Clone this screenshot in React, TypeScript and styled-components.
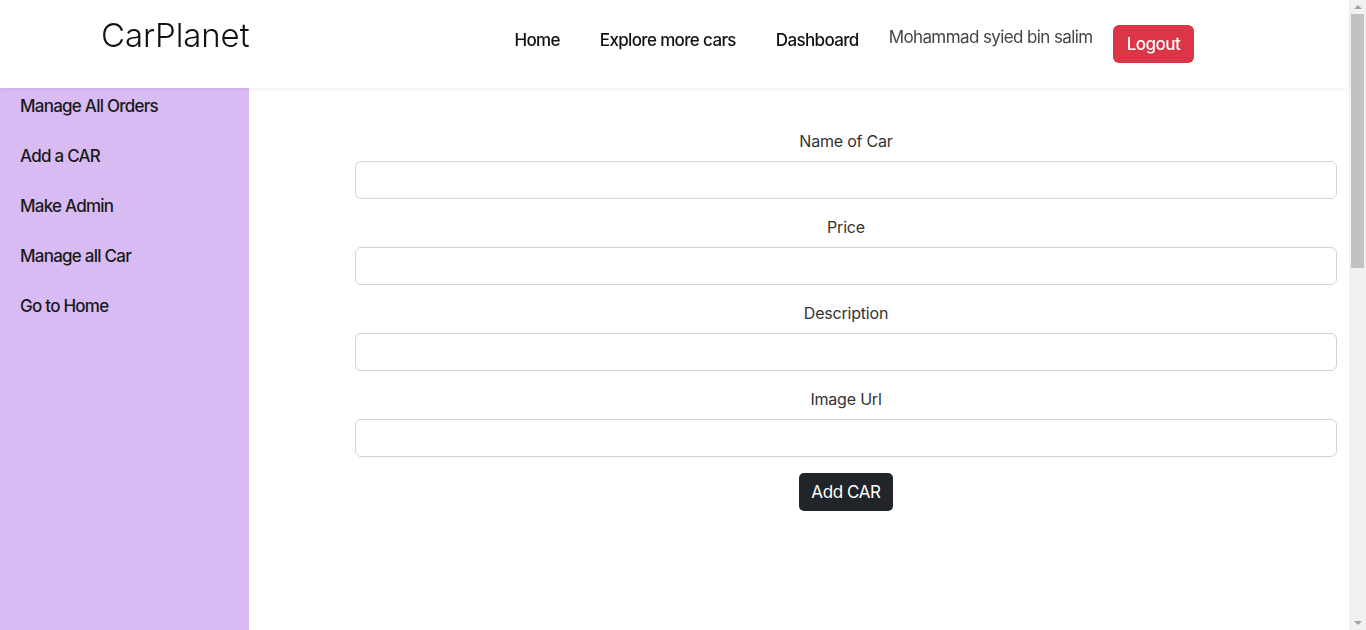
import styled, {createGlobalStyle} from "styled-components";

const GlobalStyle = createGlobalStyle`
    html, body {
        margin: 0;
        padding: 0;
    }
    body {
        font-family: "Inter", "Lato", sans-serif;
        color: #212529;
        background: #fff;
    }
    * {
        box-sizing: border-box;
    }
`

const navLinks = ["Home", "Explore more cars", "Dashboard"];
const sideLinks = ["Manage All Orders", "Add a CAR", "Make Admin", "Manage all Car", "Go to Home"];
const fields = ["Name of Car", "Price", "Description", "Image Url"];

export default function App() {
    return (
        <>
            <GlobalStyle/>
            <Page>
                <Header>
                    <Brand>CarPlanet</Brand>
                    <Nav>
                        {navLinks.map((link) => (
                            <NavLink key={link}>{link}</NavLink>
                        ))}
                        <UserName>Mohammad syied bin salim</UserName>
                        <LogoutButton>Logout</LogoutButton>
                    </Nav>
                </Header>
                <Body>
                    <Sidebar>
                        {sideLinks.map((link) => (
                            <SideLink key={link}>{link}</SideLink>
                        ))}
                    </Sidebar>
                    <Main>
                        <Form onSubmit={(e) => e.preventDefault()}>
                            {fields.map((field) => (
                                <Field key={field}>
                                    <Label>{field}</Label>
                                    <Input type="text"/>
                                </Field>
                            ))}
                            <SubmitButton type="submit">Add CAR</SubmitButton>
                        </Form>
                    </Main>
                </Body>
            </Page>
            <ScrollTrack>
                <ScrollArrow/>
                <ScrollThumb/>
                <ScrollArrow $down/>
            </ScrollTrack>
        </>
    );
}

const Page = styled.div`
    width: calc(100% - 17px);
    min-height: 1490px;
    display: flex;
    flex-direction: column;
`

const Header = styled.header`
    height: 88px;
    display: flex;
    align-items: flex-start;
    padding: 0 0 0 101px;
    box-shadow: 0 2px 4px rgba(0, 0, 0, 0.06);
    position: relative;
    z-index: 1;
`

const Brand = styled.span`
    font-size: 33px;
    font-weight: 300;
    line-height: 40px;
    margin-top: 15px;
    color: #111;
    letter-spacing: -0.1px;
`

const Nav = styled.nav`
    display: flex;
    align-items: flex-start;
    margin-left: 265px;
    margin-top: 25px;
`

const NavLink = styled.a`
    font-size: 17px;
    font-weight: 500;
    line-height: 30px;
    color: #111;
    margin-right: 40px;
    letter-spacing: -0.65px;
    cursor: pointer;

    &:last-of-type {
        margin-right: 30px;
    }
`

const UserName = styled.span`
    font-size: 17px;
    font-weight: 400;
    line-height: 24px;
    color: #444;
    letter-spacing: -0.6px;
`

const LogoutButton = styled.button`
    margin-left: 20px;
    height: 38px;
    padding: 0 14px;
    border: none;
    border-radius: 6px;
    background: #dc3545;
    color: #fff;
    font-family: inherit;
    font-size: 17px;
    font-weight: 500;
    letter-spacing: -0.5px;
`

const Body = styled.div`
    flex: 1;
    display: flex;
`

const Sidebar = styled.aside`
    width: 249px;
    background: #d8bbf2;
    padding: 6px 0 0 20px;
    display: flex;
    flex-direction: column;
    gap: 26px;
`

const SideLink = styled.a`
    font-size: 17px;
    font-weight: 500;
    line-height: 24px;
    color: #1a1a1a;
    letter-spacing: -0.75px;
    cursor: pointer;
`

const Main = styled.main`
    flex: 1;
    padding: 41px 12px 0 106px;
`

const Form = styled.form`
    display: flex;
    flex-direction: column;
    align-items: center;
`

const Field = styled.div`
    width: 100%;
    display: flex;
    flex-direction: column;
    align-items: center;
    margin-bottom: 16px;
`

const Label = styled.label`
    font-size: 16px;
    line-height: 24px;
    color: #333;
    margin-bottom: 8px;
    letter-spacing: -0.2px;
`

const Input = styled.input`
    width: 100%;
    height: 38px;
    border: 1px solid #ced4da;
    border-radius: 6px;
    padding: 6px 12px;
    font-family: inherit;
    font-size: 16px;
`

const SubmitButton = styled.button`
    height: 38px;
    padding: 0 12px;
    border: none;
    border-radius: 5px;
    background: #212529;
    color: #fff;
    font-family: inherit;
    font-size: 17px;
    letter-spacing: -0.4px;
`

const ScrollTrack = styled.div`
    position: fixed;
    top: 0;
    right: 0;
    width: 17px;
    height: 100vh;
    background: #f1f1f1;
    display: flex;
    flex-direction: column;
    align-items: center;
`

const ScrollArrow = styled.div<{ $down?: boolean }>`
    width: 17px;
    height: 14px;
    display: flex;
    align-items: center;
    justify-content: center;
    margin-top: ${({$down}) => ($down ? "auto" : "0")};

    &::before {
        content: "";
        border-left: 4px solid transparent;
        border-right: 4px solid transparent;
        ${({$down}) => ($down ? "border-top: 4px solid #a3a3a3;" : "border-bottom: 4px solid #a3a3a3;")}
    }
`

const ScrollThumb = styled.div`
    width: 13px;
    height: 254px;
    background: #c1c1c1;
`
